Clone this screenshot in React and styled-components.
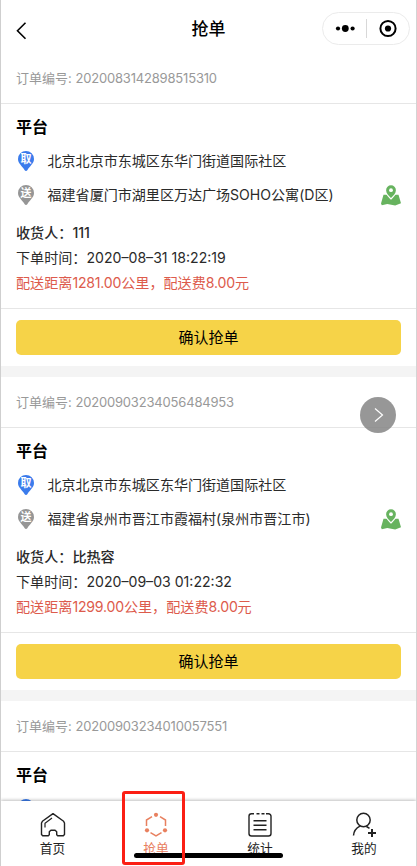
import React, { useState } from "react";
import styled, { createGlobalStyle } from "styled-components";

const GlobalStyle = createGlobalStyle`
  * {
    box-sizing: border-box;
  }
  body {
    margin: 0;
    background-color: white;
    font-family: Inter, "Noto Sans CJK SC", sans-serif;
  }
`;

const Phone = styled.div`
  position: relative;
  width: 417px;
  height: 866px;
  overflow: hidden;
  display: flex;
  flex-direction: column;
  background-color: white;
  border-left: 1px solid #cfcfcf;
  border-right: 1px solid #d4d4d4;
`;

const NavBar = styled.header`
  flex: none;
  height: 53px;
  padding: 4px 6px 0 15px;
  display: grid;
  grid-template-columns: 88px 1fr 88px;
  align-items: center;
`;

const BackButton = styled.button`
  width: 12px;
  height: 20px;
  margin-top: 4px;
  padding: 0;
  border: none;
  background: none;
  display: flex;
`;

const NavTitle = styled.h1`
  margin: 0 9px 0 0;
  font-size: 17px;
  line-height: 24px;
  font-weight: 500;
  text-align: center;
  color: black;
`;

const Capsule = styled.div`
  width: 88px;
  height: 33px;
  border: 1px solid #ebebeb;
  border-radius: 17px;
  display: flex;
  align-items: center;
`;

const OrderList = styled.main`
  flex: 1;
  min-height: 0;
  overflow: hidden;
`;

const OrderCard = styled.section`
  height: 324px;
  border-bottom: 11px solid #f4f4f4;
`;

const OrderHead = styled.div`
  height: 51px;
  padding: 0 15px;
  border-bottom: 1px solid #e6e6e6;
  font-size: 13px;
  line-height: 50px;
  color: #999;
  white-space: nowrap;
`;

const Num = styled.span`
  letter-spacing: ${(props) => props.$space || 0}px;
`;

const OrderBody = styled.div`
  height: 205px;
  padding: 11px 15px 0;
  border-bottom: 1px solid #e6e6e6;
`;

const Shop = styled.h2`
  margin: 0 0 5px;
  font-size: 16px;
  line-height: 24px;
  font-weight: 700;
  color: black;
`;

const AddressRow = styled.div`
  height: 34px;
  display: flex;
  align-items: center;
`;

const PinIcon = styled.svg`
  margin-left: 1px;
`;

const Address = styled.span`
  flex: 1;
  margin-left: 12.5px;
  font-size: 14.05px;
  line-height: 20px;
  white-space: nowrap;
  color: #2a2a2a;
`;

const InfoList = styled.div`
  margin-top: 8px;
`;

const Info = styled.p`
  margin: 0;
  font-size: 14.1px;
  line-height: 25px;
  white-space: nowrap;
  font-weight: ${(props) => (props.$bold ? 500 : 400)};
  color: ${(props) => props.$color || "#2a2a2a"};
`;

const OrderFoot = styled.div`
  padding: 11px 15px 0;
`;

const GrabButton = styled.button`
  display: block;
  width: 100%;
  height: 35px;
  padding: 0;
  border: none;
  border-radius: 5px;
  background-color: #f6d348;
  font-family: inherit;
  font-size: 15px;
  line-height: 35px;
  color: black;
`;

const NextButton = styled.button`
  position: absolute;
  top: 397px;
  left: 359px;
  width: 36px;
  height: 36px;
  padding: 0;
  border: none;
  border-radius: 50%;
  background-color: rgba(128, 128, 128, 0.82);
  display: flex;
  align-items: center;
  justify-content: center;
`;

const TabBar = styled.nav`
  position: relative;
  flex: none;
  height: 65px;
  background-color: white;
  box-shadow: 0 -1px 3px rgba(0, 0, 0, 0.25);
  display: grid;
  grid-template-columns: 103px 104px 104px 104px;
`;

const Tab = styled.a`
  padding-top: 11px;
  display: flex;
  flex-direction: column;
  align-items: center;
  font-size: 12.7px;
  line-height: 18px;
  color: ${(props) => (props.$active ? "#e8805f" : "#222")};

  svg {
    display: block;
    margin-bottom: 2px;
  }
`;

const HomeIndicator = styled.div`
  position: absolute;
  left: 133px;
  bottom: 8px;
  width: 149px;
  height: 5px;
  border-radius: 3px;
  background-color: black;
`;

const Highlight = styled.div`
  position: absolute;
  left: 121px;
  bottom: 1px;
  width: 63px;
  height: 74px;
  border: 3px solid #fb1f14;
  border-radius: 3px;
`;

const orders = [
  {
    no: "2020083142898515310",
    from: "北京北京市东城区东华门街道国际社区",
    to: "福建省厦门市湖里区万达广场SOHO公寓(D区)",
    receiver: "111",
    time: "2020-08-31 18:22:19",
    distance: "1281.00",
    fee: "8.00",
  },
  {
    no: "20200903234056484953",
    from: "北京北京市东城区东华门街道国际社区",
    to: "福建省泉州市晋江市霞福村(泉州市晋江市)",
    receiver: "比热容",
    time: "2020-09-03 01:22:32",
    distance: "1299.00",
    fee: "8.00",
  },
  {
    no: "20200903234010057551",
    from: "北京北京市东城区东华门街道国际社区",
    to: "福建省泉州市晋江市霞福村(泉州市晋江市)",
    receiver: "比热容",
    time: "2020-09-03 01:20:10",
    distance: "1299.00",
    fee: "8.00",
  },
];

function Pin({ color, text }) {
  return (
    <PinIcon width="18" height="20" viewBox="0 0 18 20">
      <path
        d="M9 0a8 8 0 0 1 8 8c0 4.600-4.500 7.300-6.700 11.200a1.500 1.500 0 0 1-2.600 0C5.500 15.300 1 12.600 1 8a8 8 0 0 1 8-8z"
        fill={color}
      />
      <text x="9" y="12" fontSize="11" fontWeight="700" fill="white" textAnchor="middle">
        {text}
      </text>
    </PinIcon>
  );
}

function MapIcon() {
  return (
    <svg width="20" height="21" viewBox="0 0 20 21">
      <path
        d="M2.500 9.800h15L20 18.200l-5.800 2.300-7.900-1.600L.8 20.300 0 18.600z"
        fill="#67b35f"
      />
      <path
        d="M10 .3a4.900 4.900 0 0 1 4.900 4.900c0 3-2.600 5.500-4.900 7.900-2.300-2.400-4.900-4.900-4.900-7.900A4.900 4.900 0 0 1 10 .3z"
        fill="#67b35f"
        stroke="white"
        strokeWidth="2.400"
        paintOrder="stroke"
      />
      <circle cx="10" cy="5.200" r="1.900" fill="white" />
    </svg>
  );
}

function HomeIcon() {
  return (
    <svg width="26" height="26" viewBox="0 0 26 26" fill="none" stroke="#222" strokeWidth="1.400">
      <path
        d="M13 1.600 2.400 9.300 1.500 11v11.500l1.200 1.300h5.600l1-1v-3.100l1.600-1.500h4.200l1.600 1.500v3.100l1 1h5.600l1.200-1.300V11l-.9-1.700z"
        strokeLinejoin="round"
      />
      <path d="M5 15.500v-4.300l7-5.200" strokeWidth="1.200" />
    </svg>
  );
}

function GrabIcon() {
  return (
    <svg width="26" height="26" viewBox="0 0 26 26" fill="none" stroke="#e8805f" strokeWidth="1.500">
      <path d="M9 4.700 3.500 8v6M17 4.700 22.500 8v6M7.500 20.700 13 24l5.500-3.300" />
      <g fill="#e8805f" stroke="none">
        <circle cx="13" cy="2.800" r="2.100" />
        <circle cx="4" cy="18.300" r="2.100" />
        <circle cx="22" cy="18.300" r="2.100" />
      </g>
    </svg>
  );
}

function StatIcon() {
  return (
    <svg width="26" height="26" viewBox="0 0 26 26" fill="none" stroke="#222" strokeWidth="1.400">
      <path d="M7 1.700H4.500a2.500 2.500 0 0 0-2.500 2.500v17.300A2.500 2.500 0 0 0 4.500 24h17a2.500 2.500 0 0 0 2.500-2.500V4.200a2.500 2.500 0 0 0-2.500-2.500H19M9.500 1.700h3M14.500 1.700h3" />
      <path d="M6.500 8.800h13M6.500 13.300h13M6.500 17.800h13" />
    </svg>
  );
}

function MineIcon() {
  return (
    <svg width="26" height="26" viewBox="0 0 26 26" fill="none" stroke="#222" strokeWidth="1.500">
      <circle cx="12.500" cy="8" r="6.700" />
      <path d="M2.500 23.500c.4-4.500 2.800-7.500 6.500-9.300M15.500 14.500l3 1.900" />
      <path d="M21 17v8M17 21h8" strokeWidth="2" />
    </svg>
  );
}

const tabs = [
  { name: "首页", icon: <HomeIcon /> },
  { name: "抢单", icon: <GrabIcon /> },
  { name: "统计", icon: <StatIcon /> },
  { name: "我的", icon: <MineIcon /> },
];

function Order({ order }) {
  return (
    <OrderCard>
      <OrderHead>
        订单编号: <Num $space={-0.18}>{order.no}</Num>
      </OrderHead>
      <OrderBody>
        <Shop>平台</Shop>
        <AddressRow>
          <Pin color="#3b7cec" text="取" />
          <Address>{order.from}</Address>
        </AddressRow>
        <AddressRow>
          <Pin color="#969696" text="送" />
          <Address>{order.to}</Address>
          <MapIcon />
        </AddressRow>
        <InfoList>
          <Info $bold>收货人：{order.receiver}</Info>
          <Info>
            下单时间：<Num>{order.time.replace(/-/g, "–")}</Num>
          </Info>
          <Info $color="#dd5b4c">
            配送距离<Num $space={-0.2}>{order.distance}</Num>公里，配送费
            <Num $space={-0.2}>{order.fee}</Num>元
          </Info>
        </InfoList>
      </OrderBody>
      <OrderFoot>
        <GrabButton>确认抢单</GrabButton>
      </OrderFoot>
    </OrderCard>
  );
}

function App() {
  const [active, setActive] = useState("抢单");

  return (
    <>
      <GlobalStyle />
      <Phone>
        <NavBar>
          <BackButton>
            <svg width="12" height="20" viewBox="0 0 12 20" fill="none" stroke="black" strokeWidth="1.600">
              <path d="M9.500 1.800 1.500 9.800l8 8" />
            </svg>
          </BackButton>
          <NavTitle>抢单</NavTitle>
          <Capsule>
            <svg width="86" height="31" viewBox="0 0 86 31">
              <circle cx="15" cy="15.500" r="2.100" />
              <circle cx="22.300" cy="15.500" r="3.400" />
              <circle cx="29.600" cy="15.500" r="2.100" />
              <path d="M43.500 6v19" stroke="#d8d8d8" />
              <circle cx="65" cy="15.500" r="7.600" fill="none" stroke="black" strokeWidth="2" />
              <circle cx="65" cy="15.500" r="3.100" />
            </svg>
          </Capsule>
        </NavBar>
        <OrderList>
          {orders.map((order) => (
            <Order key={order.no} order={order} />
          ))}
        </OrderList>
        <TabBar>
          {tabs.map((tab) => (
            <Tab
              key={tab.name}
              $active={tab.name === active}
              onClick={() => {
                setActive(tab.name);
              }}
            >
              {tab.icon}
              {tab.name}
            </Tab>
          ))}
        </TabBar>
        <NextButton>
          <svg width="12" height="16" viewBox="0 0 12 16" fill="none" stroke="white" strokeWidth="1.200">
            <path d="m3 1.500 7.500 6.500L3 14.500" />
          </svg>
        </NextButton>
        <HomeIndicator />
        <Highlight />
      </Phone>
    </>
  );
}

export default App;
